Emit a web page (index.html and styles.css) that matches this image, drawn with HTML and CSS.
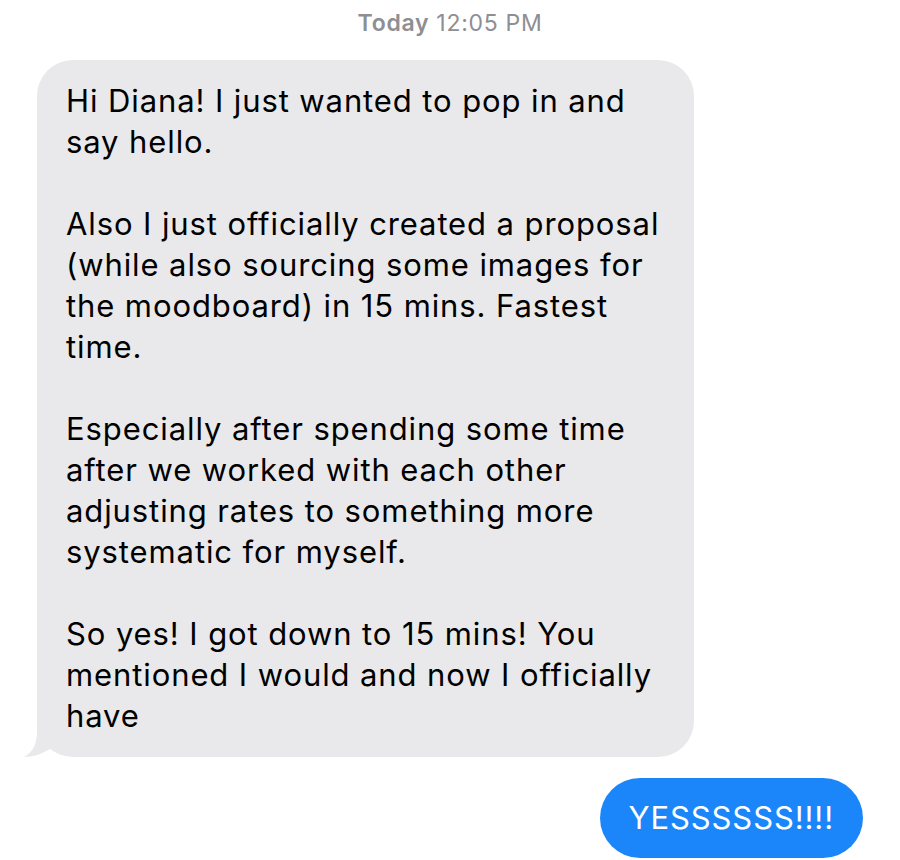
FILE: index.html
```html
<!DOCTYPE html>
<html>
<head>
<meta charset="utf-8">
<link rel="stylesheet" href="styles.css">
</head>
<body>
<div class="thread">
  <div class="stamp"><span class="day">Today</span> 12:05 PM</div>
  <div class="row incoming">
    <div class="bubble gray">
      <p>Hi Diana! I just wanted to pop in and<br>say hello.</p>
      <p>Also I just officially created a proposal<br>(while also sourcing some images for<br>the moodboard) in 15 mins. Fastest<br>time.</p>
      <p>Especially after spending some time<br>after we worked with each other<br>adjusting rates to something more<br>systematic for myself.</p>
      <p>So yes! I got down to 15 mins! You<br>mentioned I would and now I officially<br>have</p>
      <svg class="tail" width="40" height="40" viewBox="0 0 40 40"><path d="M13,0 L13,14 C13,28 8,36 0,40 C9,40 18,37 26,32 L40,20 L40,0 Z" fill="#e9e9eb"/></svg>
    </div>
  </div>
  <div class="row outgoing">
    <div class="bubble blue">YESSSSSS!!!!</div>
  </div>
</div>
</body>
</html>
```

FILE: styles.css
```css
html, body {
  margin: 0;
  padding: 0;
  background: #ffffff;
}
body {
  width: 900px;
  height: 860px;
  overflow: hidden;
  font-family: Inter, "Noto Sans", sans-serif;
}
.thread {
  display: flex;
  flex-direction: column;
}
.stamp {
  padding-top: 8px;
  height: 30px;
  line-height: 30px;
  text-align: center;
  font-size: 23px;
  letter-spacing: 0.7px;
  color: #8e8e93;
}
.day {
  font-weight: 600;
}
.row {
  display: flex;
}
.incoming {
  padding-left: 37px;
  margin-top: 22px;
}
.outgoing {
  justify-content: flex-end;
  padding-right: 37px;
  margin-top: 21px;
}
.bubble {
  position: relative;
  box-sizing: border-box;
  font-size: 31px;
  letter-spacing: 0.9px;
  line-height: 41px;
  white-space: nowrap;
}
.gray {
  width: 657px;
  background: #e9e9eb;
  color: #000000;
  border-radius: 36px;
  padding: 20px 29px 21px;
}
.gray p {
  margin: 0 0 41px;
}
.gray p:last-of-type {
  margin-bottom: 0;
}
.tail {
  position: absolute;
  left: -13px;
  bottom: 0;
}
.blue {
  background: #1b86fa;
  color: #ffffff;
  height: 80px;
  line-height: 80px;
  border-radius: 40px;
  padding: 0 29px;
}
```
